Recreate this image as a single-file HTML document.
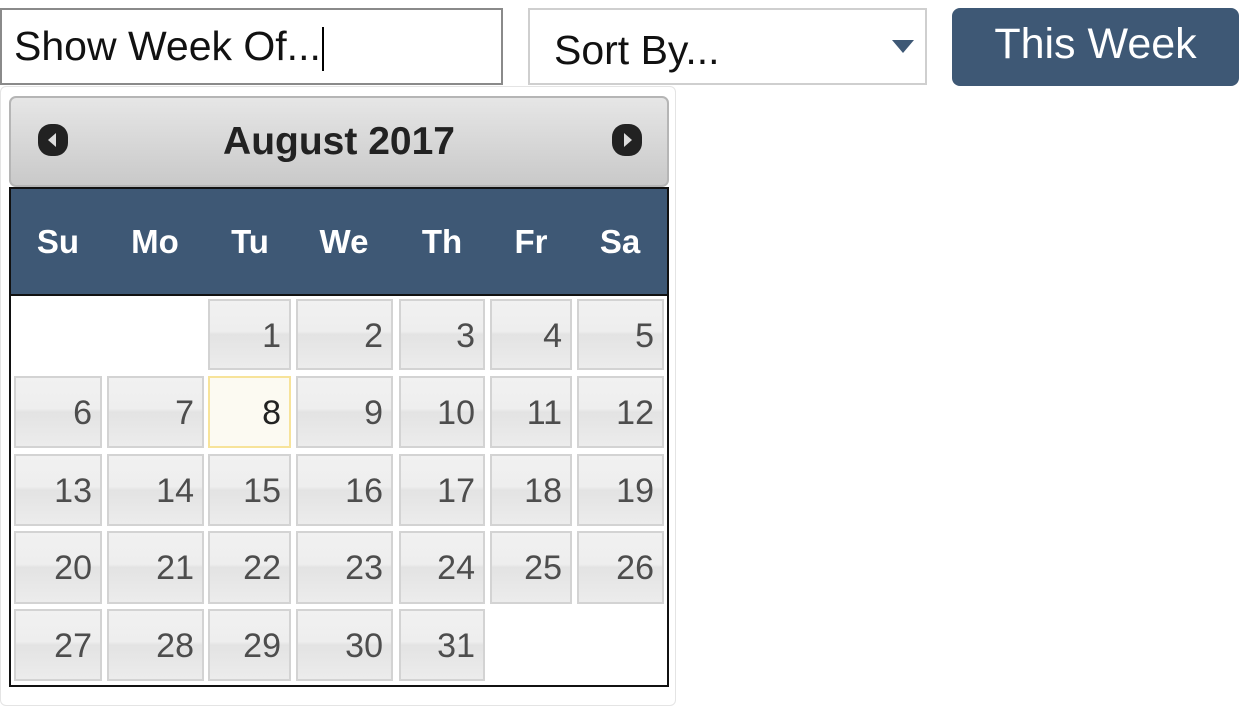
<!DOCTYPE html>
<html><head><style>
body{margin:0;width:1251px;height:697px;background:#fff;font-family:"Liberation Sans",Arial,sans-serif;position:relative;overflow:hidden}
.a{position:absolute;box-sizing:border-box}
.c{position:absolute;box-sizing:border-box;border:2px solid #d3d3d3;background:linear-gradient(#f1f1f1 0%,#eeeeee 45%,#e3e3e3 50%,#ececec 100%);color:#4d4d4d;font-size:34px;text-align:right;padding-right:8px;line-height:70px}
.h{position:absolute;top:222px;color:#fff;font-weight:bold;font-size:33px;line-height:40px;transform:translateX(-50%)}
</style></head><body>
<div class="a" style="left:0;top:8px;width:503px;height:77px;border:2px solid #8a8a8a;font-size:41px;line-height:72px;padding-left:12px;color:#111">Show Week Of...<span style="display:inline-block;width:2px;height:44px;background:#000;vertical-align:middle;margin-left:1px"></span></div>
<div class="a" style="left:528px;top:8px;width:399px;height:77px;border:2px solid #cfcfcf;font-size:41px;line-height:80px;padding-left:24px;color:#111">Sort By...
<svg class="a" style="left:362px;top:30px" width="22" height="14"><path d="M0 0H22L11 13Z" fill="#3e5875"/></svg></div>
<div class="a" style="left:952px;top:8px;width:287px;height:78px;background:#3e5875;border-radius:8px;color:#fff;font-size:43px;line-height:72px;text-align:center">This Week</div>
<div class="a" style="left:0;top:86px;width:676px;height:620px;border:1px solid #e4e4e4;border-radius:6px;background:#fff"></div>
<div class="a" style="left:9px;top:96px;width:660px;height:91px;border:2px solid #b5b5b5;border-radius:7px;background:linear-gradient(#e6e6e6,#c9c9c9);text-align:center;font-weight:bold;font-size:39px;line-height:88px;color:#222">August 2017
<svg class="a" style="left:26px;top:25px" width="32" height="34"><rect x="1" y="1" width="30" height="32" rx="13" fill="#222"/><path d="M19 10L11 17L19 24Z" fill="#ddd"/></svg>
<svg class="a" style="left:600px;top:25px" width="32" height="34"><rect x="1" y="1" width="30" height="32" rx="13" fill="#222"/><path d="M13 10L21 17L13 24Z" fill="#ddd"/></svg></div>
<div class="a" style="left:9px;top:187px;width:660px;height:500px;border:2px solid #111;background:#fff"></div>
<div class="a" style="left:11px;top:189px;width:656px;height:107px;background:#3e5875;border-bottom:2px solid #111"></div>
<div class="h" style="left:58px">Su</div><div class="h" style="left:155px">Mo</div><div class="h" style="left:250px">Tu</div><div class="h" style="left:344px">We</div><div class="h" style="left:442px">Th</div><div class="h" style="left:531px">Fr</div><div class="h" style="left:620px">Sa</div>
<div id="g"></div>
<script>
var xs=[[14,88],[107,97],[208,83],[296,97],[399,86],[490,82],[577,87]],ys=[[299,71],[376,72],[454,72],[531,73],[609,72]],h='';
for(var d=1;d<=31;d++){var i=d+1,r=Math.floor(i/7),c=i%7;var st='left:'+xs[c][0]+'px;top:'+ys[r][0]+'px;width:'+xs[c][1]+'px;height:'+ys[r][1]+'px;';if(d==8)st+='border-color:#f7e39a;background:#fcfaf2;color:#222;';h+='<div class="c" style="'+st+'">'+d+'</div>';}
document.getElementById('g').innerHTML=h;
</script>
</body></html>
